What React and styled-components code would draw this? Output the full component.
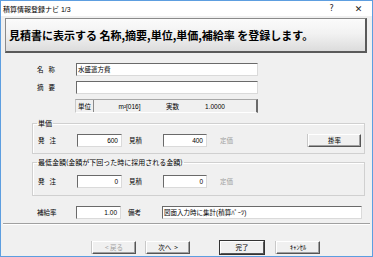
import React from "react";
import styled, { createGlobalStyle } from "styled-components";

const Global = createGlobalStyle`
  html, body { margin: 0; padding: 0; background: #ffffff; }
  body { font-family: "Liberation Sans", "Noto Sans CJK JP", sans-serif; }
  * { box-sizing: border-box; }
`;

const Window = styled.div`
  width: 373px;
  height: 257px;
  border: 1px solid #5d9ee0;
  display: flex;
  flex-direction: column;
  background: #f0f0f0;
  overflow: hidden;
`;

const TitleBar = styled.div`
  height: 15px;
  flex: none;
  background: #ffffff;
  display: flex;
  align-items: center;
  justify-content: space-between;
  padding-left: 2px;
  font-size: 7px;
  color: #000;
`;

const TitleControls = styled.div`
  display: flex;
  align-items: center;
  color: #222;
`;

const TitleControl = styled.span`
  width: 27px;
  text-align: center;
  font-family: "DejaVu Sans", sans-serif;
  font-size: ${(p) => p.$size || 9}px;
`;

const Content = styled.div`
  flex: 1;
  display: flex;
  flex-direction: column;
`;

const HeaderButton = styled.div`
  margin: 2px 5px 0 4px;
  height: 35px;
  flex: none;
  display: flex;
  align-items: center;
  padding-left: 3px;
  border: 1px solid #8a8a8a;
  border-right: 2px solid #5a5a5a;
  border-bottom: 2px solid #5a5a5a;
  background: linear-gradient(#fbfbfb, #f2f2f2 45%, #dcdcdc);
  font-family: "Noto Sans CJK JP", sans-serif;
  font-weight: 700;
  font-size: 11px;
  color: #000;
  white-space: pre;
`;

const Form = styled.div`
  margin-left: 31px;
  width: 333px;
  display: flex;
  flex-direction: column;
`;

const Row = styled.div`
  display: flex;
  align-items: center;
  height: 13px;
  padding-left: 5px;
  margin-top: ${(p) => p.$top || 0}px;
  padding-right: 3px;
`;

const Label = styled.span`
  flex: none;
  width: ${(p) => p.$w || 39}px;
  font-size: 6.5px;
  color: ${(p) => (p.$disabled ? "#a0a0a0" : "#000")};
  margin-left: ${(p) => p.$ml || 0}px;
  font-family: "Noto Sans CJK JP", sans-serif;
  line-height: 13px;
  white-space: nowrap;
`;

const Justified = styled.span`
  display: inline-block;
  width: 18px;
  white-space: nowrap;
  text-align: justify;
  text-align-last: justify;
`;

const Field = styled.div`
  flex: none;
  width: ${(p) => p.$w}px;
  height: 13px;
  background: #ffffff;
  border: 1px solid;
  border-color: #6a6a6a #dadada #dadada #6a6a6a;
  font-size: 6.5px;
  line-height: 11px;
  padding: 0 ${(p) => (p.$right ? 3 : 1)}px;
  text-align: ${(p) => (p.$right ? "right" : "left")};
  font-family: "Liberation Sans", "Noto Sans CJK JP", sans-serif;
  color: #000;
  white-space: nowrap;
  overflow: hidden;
`;

const UnitBox = styled.div`
  margin-left: 38px;
  width: 183px;
  height: 14px;
  display: flex;
  align-items: center;
  border-top: 1px solid #a8a8a8;
  border-left: 1px solid #c8c8c8;
  border-right: 2px solid #6a6a6a;
  border-bottom: 1px solid #ffffff;
  font-size: 6.5px;
  font-family: "Liberation Sans", "Noto Sans CJK JP", sans-serif;
`;

const UnitCell = styled.span`
  flex: none;
  width: ${(p) => p.$w}px;
  text-align: ${(p) => p.$align || "left"};
  padding-left: ${(p) => p.$pl || 0}px;
  height: 100%;
  line-height: 13px;
  font-family: ${(p) => (p.$cjk ? '"Noto Sans CJK JP", sans-serif' : 'inherit')};
  border-left: ${(p) => (p.$sep ? "1px solid #8a8a8a" : "none")};
`;

const Group = styled.fieldset`
  margin: ${(p) => p.$top}px 0 0 0;
  padding: ${(p) => p.$pt}px 0 ${(p) => p.$pb}px 0;
  border: 1px solid #d0d0d0;
  box-shadow: inset 1px 1px #ffffff;
  min-width: 0;
`;

const Legend = styled.legend`
  margin-left: 4px;
  padding: 0 1px;
  font-size: 7px;
  line-height: 10px;
  font-family: "Noto Sans CJK JP", sans-serif;
  color: #000;
`;

const Spacer = styled.div`
  flex: 1;
`;

const PushButton = styled.button`
  flex: none;
  width: ${(p) => p.$w || 44}px;
  height: 13px;
  margin-left: ${(p) => p.$ml || 0}px;
  padding: 0;
  background: #f0f0f0;
  border: 1px solid;
  border-color: #ffffff #555555 #555555 #ffffff;
  box-shadow: ${(p) =>
    p.$default ? "0 0 0 1px #333333" : "inset -1px -1px #a0a0a0, -1px 0 #c8c8c8"};
  font-family: "Noto Sans CJK JP", sans-serif;
  font-size: 6.5px;
  line-height: 11px;
  color: ${(p) => (p.$disabled ? "#a0a0a0" : "#000")};
  white-space: pre;
  cursor: default;
`;

const Separator = styled.div`
  margin: 4px 2px 0 2px;
  height: 2px;
  flex: none;
  border-top: 1px solid #a0a0a0;
  border-bottom: 1px solid #ffffff;
`;

const Footer = styled.div`
  display: flex;
  align-items: center;
  margin-top: 16px;
  padding-left: 91px;
`;

export default function App() {
  return (
    <>
      <Global />
      <Window>
        <TitleBar>
          <span>積算情報登録ナビ 1/3</span>
          <TitleControls>
            <TitleControl $size={8}>?</TitleControl>
            <TitleControl $size={9}>✕</TitleControl>
          </TitleControls>
        </TitleBar>
        <Content>
          <HeaderButton>見積書に表示する 名称,摘要,単位,単価,補給率 を登録します。</HeaderButton>
          <Form>
            <Row $top={10}>
              <Label><Justified>名称</Justified></Label>
              <Field $w={182}>水盛遣方費</Field>
            </Row>
            <Row $top={5}>
              <Label><Justified>摘要</Justified></Label>
              <Field $w={182}></Field>
            </Row>
            <Row $top={5}>
              <UnitBox>
                <UnitCell $w={17} $pl={2} $cjk>単位</UnitCell>
                <UnitCell $w={72} $align="center" $sep>m²[016]</UnitCell>
                <UnitCell $w={30} $pl={1} $cjk>実数</UnitCell>
                <UnitCell $w={40} $align="center">1.0000</UnitCell>
              </UnitBox>
            </Row>
            <Group $top={6} $pt={6} $pb={6}>
              <Legend>単価</Legend>
              <Row>
                <Label><Justified>発注</Justified></Label>
                <Field $w={45} $right>600</Field>
                <Label $ml={7} $w={34}>見積</Label>
                <Field $w={44} $right>400</Field>
                <Label $ml={13} $w={20} $disabled>定価</Label>
                <Spacer />
                <PushButton $w={53}>掛率</PushButton>
              </Row>
            </Group>
            <Group $top={3} $pt={8} $pb={7}>
              <Legend>最低金額(金額が下回った時に採用される金額)</Legend>
              <Row>
                <Label><Justified>発注</Justified></Label>
                <Field $w={45} $right>0</Field>
                <Label $ml={7} $w={34}>見積</Label>
                <Field $w={44} $right>0</Field>
                <Label $ml={13} $w={20} $disabled>定価</Label>
                <Spacer />
              </Row>
            </Group>
            <Row $top={10}>
              <Label><Justified>補給率</Justified></Label>
              <Field $w={45} $right>1.00</Field>
              <Label $ml={7} $w={34}>備考</Label>
              <Field $w={200}>図面入力時に集計(積算ﾊﾟｰﾂ)</Field>
            </Row>
          </Form>
          <Separator />
          <Footer>
            <PushButton $disabled>{"< 戻る"}</PushButton>
            <PushButton $ml={10}>{"次へ  >"}</PushButton>
            <PushButton $ml={30} $default>完了</PushButton>
            <PushButton $ml={12}>ｷｬﾝｾﾙ</PushButton>
          </Footer>
        </Content>
      </Window>
    </>
  );
}
